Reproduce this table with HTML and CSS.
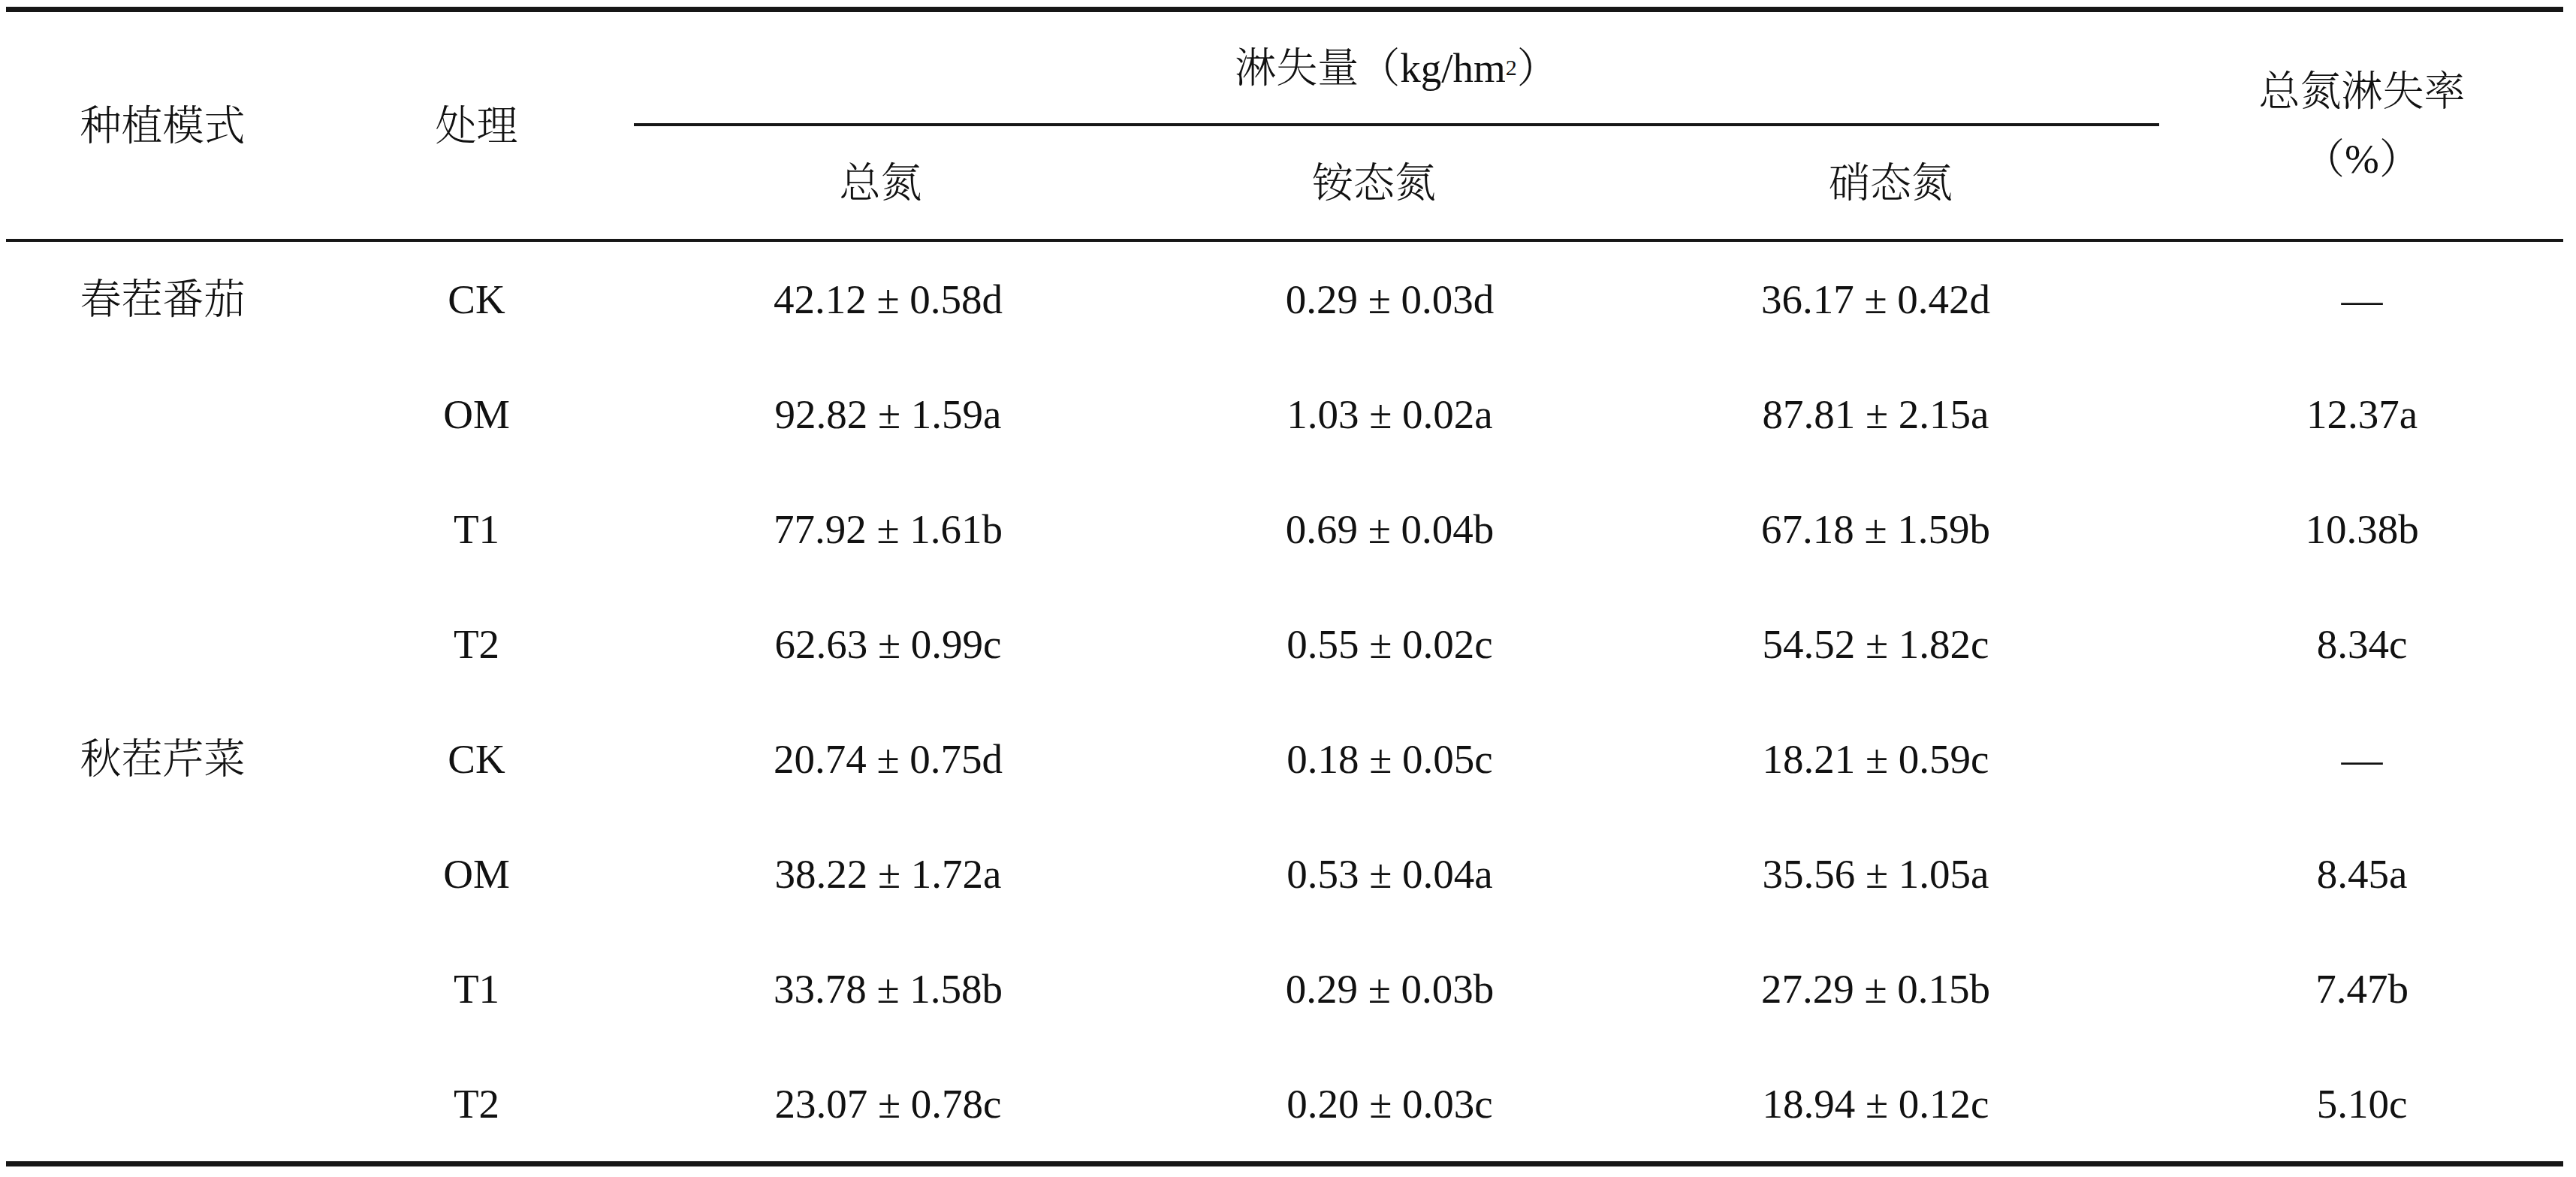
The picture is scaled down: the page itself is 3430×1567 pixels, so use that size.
FILE: index.html
```html
<!DOCTYPE html>
<html lang="zh-CN">
<head>
<meta charset="utf-8">
<title>淋失量</title>
<link rel="stylesheet" href="styles.css">
</head>
<body>
<div class="table">
  <div class="thead">
    <div class="cell h-mode">种植模式</div>
    <div class="cell h-treat">处理</div>
    <div class="cell h-loss">淋失量（kg/hm<span class="sup">2</span>）</div>
    <div class="cell h-sub h-c3">总氮</div>
    <div class="cell h-sub h-c4">铵态氮</div>
    <div class="cell h-sub h-c5">硝态氮</div>
    <div class="cell h-rate"><span class="ln">总氮淋失率</span><span class="ln">（%）</span></div>
  </div>
  <div class="tbody">
    <div class="cell">春茬番茄</div><div class="cell">CK</div><div class="cell d3">42.12 ± 0.58d</div><div class="cell d4">0.29 ± 0.03d</div><div class="cell d5">36.17 ± 0.42d</div><div class="cell">—</div>
    <div class="cell"></div><div class="cell">OM</div><div class="cell d3">92.82 ± 1.59a</div><div class="cell d4">1.03 ± 0.02a</div><div class="cell d5">87.81 ± 2.15a</div><div class="cell">12.37a</div>
    <div class="cell"></div><div class="cell">T1</div><div class="cell d3">77.92 ± 1.61b</div><div class="cell d4">0.69 ± 0.04b</div><div class="cell d5">67.18 ± 1.59b</div><div class="cell">10.38b</div>
    <div class="cell"></div><div class="cell">T2</div><div class="cell d3">62.63 ± 0.99c</div><div class="cell d4">0.55 ± 0.02c</div><div class="cell d5">54.52 ± 1.82c</div><div class="cell">8.34c</div>
    <div class="cell">秋茬芹菜</div><div class="cell">CK</div><div class="cell d3">20.74 ± 0.75d</div><div class="cell d4">0.18 ± 0.05c</div><div class="cell d5">18.21 ± 0.59c</div><div class="cell">—</div>
    <div class="cell"></div><div class="cell">OM</div><div class="cell d3">38.22 ± 1.72a</div><div class="cell d4">0.53 ± 0.04a</div><div class="cell d5">35.56 ± 1.05a</div><div class="cell">8.45a</div>
    <div class="cell"></div><div class="cell">T1</div><div class="cell d3">33.78 ± 1.58b</div><div class="cell d4">0.29 ± 0.03b</div><div class="cell d5">27.29 ± 0.15b</div><div class="cell">7.47b</div>
    <div class="cell"></div><div class="cell">T2</div><div class="cell d3">23.07 ± 0.78c</div><div class="cell d4">0.20 ± 0.03c</div><div class="cell d5">18.94 ± 0.12c</div><div class="cell">5.10c</div>
  </div>
</div>
</body>
</html>
```
FILE: styles.css
```css
html, body {
  margin: 0;
  padding: 0;
  background: #ffffff;
}

body {
  color: #111111;
  font-family: "Liberation Serif", "Noto Serif CJK SC", "Noto Sans CJK SC", serif;
  font-size: 55px;
  font-weight: 300;
  line-height: 1;
}

.table {
  --cols: 417px 419px 657px 657px 719px 536px;
  width: 3405px;
  margin: 9px 0 0 8px;
  border-top: 7px solid #161616;
  border-bottom: 7px solid #161616;
  display: flex;
  flex-direction: column;
}

.thead {
  display: grid;
  grid-template-columns: var(--cols);
  grid-template-rows: 152px 150px;
  border-bottom: 4px solid #161616;
}

.tbody {
  display: grid;
  grid-template-columns: var(--cols);
  grid-auto-rows: 153px;
}

.cell {
  display: flex;
  align-items: center;
  justify-content: center;
  white-space: nowrap;
  box-sizing: border-box;
}

.h-mode { grid-column: 1; grid-row: 1 / 3; }
.h-treat { grid-column: 2; grid-row: 1 / 3; }
.h-loss {
  grid-column: 3 / 6;
  grid-row: 1;
  border-bottom: 4px solid #161616;
  margin-right: 2px;
}
.h-c3 { grid-column: 3; grid-row: 2; }
.h-c4 { grid-column: 4; grid-row: 2; }
.h-c5 { grid-column: 5; grid-row: 2; }
.h-rate {
  grid-column: 6;
  grid-row: 1 / 3;
  flex-direction: column;
  line-height: 90px;
}
.ln { display: block; }

.sup {
  font-size: 30px;
  vertical-align: 28px;
  line-height: 0;
}

.d3 { padding-left: 20px; }
.d4 { padding-left: 42px; }
.d5 { padding-right: 40px; }
```
